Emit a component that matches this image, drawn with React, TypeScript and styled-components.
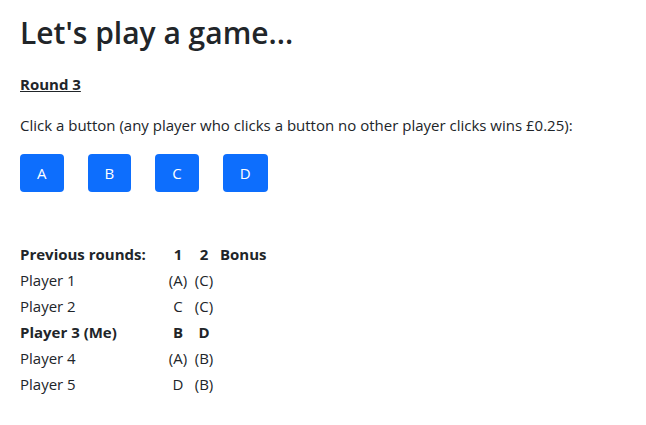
import React, { type ReactElement } from 'react'
import { styled, createGlobalStyle } from 'styled-components'

const GlobalStyle = createGlobalStyle`
  body {
    margin: 0;
    background: #ffffff;
    color: #212529;
    font-family: "Open Sans", "Noto Sans", sans-serif;
    font-size: 15px;
  }
`

const Page = styled.div`
  padding: 14px 20px 20px;
`

const Title = styled.h1`
  margin: 0 0 20px;
  font-size: 30px;
  font-weight: 600;
  line-height: 38px;
`

const RoundLabel = styled.div`
  font-weight: 700;
  text-decoration: underline;
  line-height: 24px;
  margin-bottom: 17px;
`

const Prompt = styled.p`
  margin: 0 0 17px;
  line-height: 24px;
`

const ButtonRow = styled.div`
  display: flex;
  gap: 24px;
  margin-bottom: 49px;
`

const ChoiceButton = styled.button`
  height: 38px;
  padding: 0 17px;
  border: none;
  border-radius: 4px;
  background: #0d6efd;
  color: #ffffff;
  font-family: inherit;
  font-size: 15px;
  cursor: pointer;
`

const Results = styled.table`
  border-collapse: collapse;
  line-height: 26px;
`

const Cell = styled.td<{ $bold?: boolean; $center?: boolean; $w?: number }>`
  padding: 0;
  font-weight: ${(p) => (p.$bold ? 700 : 400)};
  text-align: ${(p) => (p.$center ? 'center' : 'left')};
  width: ${(p) => (p.$w ? `${p.$w}px` : 'auto')};
  white-space: nowrap;
`

const BonusHead = styled(Cell)`
  padding-left: 3px;
`

interface Row {
  name: string;
  picks: string[];
  me?: boolean;
}

const rows: Row[] = [
  { name: 'Player 1', picks: ['(A)', '(C)'] },
  { name: 'Player 2', picks: ['C', '(C)'] },
  { name: 'Player 3 (Me)', picks: ['B', 'D'], me: true },
  { name: 'Player 4', picks: ['(A)', '(B)'] },
  { name: 'Player 5', picks: ['D', '(B)'] },
]

export default function App (): ReactElement {
  return (
    <Page>
      <GlobalStyle />
      <Title>Let's play a game...</Title>
      <RoundLabel>Round 3</RoundLabel>
      <Prompt>Click a button (any player who clicks a button no other player clicks wins £0.25):</Prompt>

      <ButtonRow>
        {['A', 'B', 'C', 'D'].map((l) => (
          <ChoiceButton key={l}>{l}</ChoiceButton>
        ))}
      </ButtonRow>

      <Results>
        <thead>
          <tr>
            <Cell $bold $w={145}>Previous rounds:</Cell>
            <Cell $bold $center $w={26}>1</Cell>
            <Cell $bold $center $w={26}>2</Cell>
            <BonusHead $bold>Bonus</BonusHead>
          </tr>
        </thead>
        <tbody>
          {rows.map((r) => (
            <tr key={r.name}>
              <Cell $bold={r.me}>{r.name}</Cell>
              {r.picks.map((p, i) => (
                <Cell key={i} $bold={r.me} $center>{p}</Cell>
              ))}
              <Cell />
            </tr>
          ))}
        </tbody>
      </Results>
    </Page>
  )
}
